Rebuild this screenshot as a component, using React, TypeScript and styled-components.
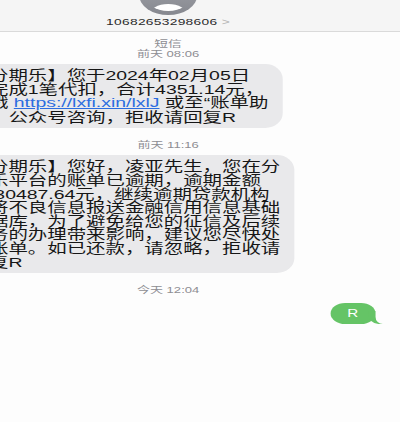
import React from "react";
import styled, { createGlobalStyle } from "styled-components";

// the reference is a phone capture stretched sideways, so the page is laid
// out at its natural width and widened by STRETCH
const STRETCH = 1.45;
const PAGE_W = 400 / STRETCH;

const GlobalStyle = createGlobalStyle`
  html, body {
    margin: 0;
    padding: 0;
    background: #fdfdfd;
    overflow: hidden;
  }
  body {
    font-family: "Liberation Sans", "Noto Sans CJK SC", sans-serif;
  }
`;

const Screen = styled.div`
  width: ${PAGE_W}px;
  height: 422px;
  overflow: hidden;
  background: #fdfdfd;
  display: flex;
  flex-direction: column;
  transform: scaleX(${STRETCH});
  transform-origin: 0 0;
`;

const Header = styled.header`
  height: 32px;
  box-sizing: border-box;
  background: #f5f5f5;
  border-bottom: 1px solid #dadada;
  display: flex;
  flex-direction: column;
  align-items: center;
  padding-right: 44px;
`;

const AvatarCrop = styled.div`
  height: 15px;
  overflow: hidden;
  display: flex;
  align-items: flex-end;
`;

const PhoneNumber = styled.div`
  font-size: 9.5px;
  line-height: 14px;
  letter-spacing: 0.2px;
  color: #2b2b2b;
`;

const Chevron = styled.span`
  color: #b3b3b3;
  margin-left: 3px;
`;

const Thread = styled.main`
  display: flex;
  flex-direction: column;
  padding-top: 6px;
`;

const Stamp = styled.div<{ $size?: number; $gap?: number }>`
  padding-right: 44px;
  text-align: center;
  color: #8e8e93;
  font-size: ${(p) => p.$size ?? 9}px;
  line-height: ${(p) => (p.$size ? 11 : 10)}px;
  margin-top: ${(p) => p.$gap ?? 0}px;
`;

const Bubble = styled.div<{ $gap: number }>`
  align-self: flex-start;
  margin-left: -30px;
  margin-top: ${(p) => p.$gap}px;
  padding: 5px 10px 4px 9px;
  background: #e9e9eb;
  border-radius: 12px / 15px;
  color: #161616;
  font-size: 13.4px;
  line-height: 13.6px;
`;

const Line = styled.div`
  white-space: nowrap;
`;

const Quote = styled.span`
  font-family: "Noto Sans CJK SC", sans-serif;
`;

const Link = styled.a`
  color: #2c6de0;
  text-decoration: underline;
  text-underline-offset: 1px;
`;

const Sent = styled.div`
  position: relative;
  align-self: flex-end;
  margin: 8px 17px 0 0;
  width: 31px;
  height: 21px;
  border-radius: 10px / 10.5px;
  background: #65c466;
  color: #fff;
  font-size: 10.5px;
  line-height: 21px;
  text-align: center;

  &::before {
    content: "";
    position: absolute;
    right: -5px;
    bottom: 0;
    width: 10px;
    height: 13px;
    background: #65c466;
    border-bottom-left-radius: 7px 10px;
  }
  &::after {
    content: "";
    position: absolute;
    right: -7px;
    bottom: 0;
    width: 7px;
    height: 14px;
    background: #fdfdfd;
    border-bottom-left-radius: 5px 7px;
  }
`;

const Avatar = () => (
  <svg width="40" height="40" viewBox="0 0 40 40">
    <defs>
      <linearGradient id="av" x1="0" y1="0" x2="0" y2="1">
        <stop offset="0" stopColor="#a4a6ac" />
        <stop offset="1" stopColor="#86888f" />
      </linearGradient>
      <clipPath id="inner">
        <circle cx="20" cy="20" r="16" />
      </clipPath>
    </defs>
    <circle cx="20" cy="20" r="20" fill="url(#av)" />
    <g clipPath="url(#inner)" fill="#fff">
      <circle cx="20" cy="17" r="7" />
      <ellipse cx="20" cy="40" rx="13" ry="11" />
    </g>
  </svg>
);

const secondMessage = [
  "【分期乐】您好，凌亚先生，您在分",
  "期乐平台的账单已逾期，逾期金额",
  "为 30487.64元，继续逾期贷款机构",
  "或将不良信息报送金融信用信息基础",
  "数据库，为了避免给您的征信及后续",
  "业务的办理带来影响，建议您尽快处",
  "理账单。如已还款，请忽略，拒收请",
  "回复R",
];

export default function App() {
  return (
    <Screen>
      <GlobalStyle />
      <Header>
        <AvatarCrop>
          <Avatar />
        </AvatarCrop>
        <PhoneNumber>
          10682653298606<Chevron>&gt;</Chevron>
        </PhoneNumber>
      </Header>
      <Thread>
        <Stamp $size={9.5}>短信</Stamp>
        <Stamp>前天 08:06</Stamp>
        <Bubble $gap={5}>
          <Line>【分期乐】您于2024年02月05日</Line>
          <Line>已完成1笔代扣，合计4351.14元，</Line>
          <Line>
            可戳 <Link>https://lxfi.xin/lxlJ</Link> 或至“账单助
          </Line>
          <Line>
            手<Quote>”</Quote>公众号咨询，拒收请回复R
          </Line>
        </Bubble>
        <Stamp $gap={12}>前天 11:16</Stamp>
        <Bubble $gap={5}>
          {secondMessage.map((line, i) => (
            <Line key={i}>{line}</Line>
          ))}
        </Bubble>
        <Stamp $gap={12}>今天 12:04</Stamp>
        <Sent>R</Sent>
      </Thread>
    </Screen>
  );
}
